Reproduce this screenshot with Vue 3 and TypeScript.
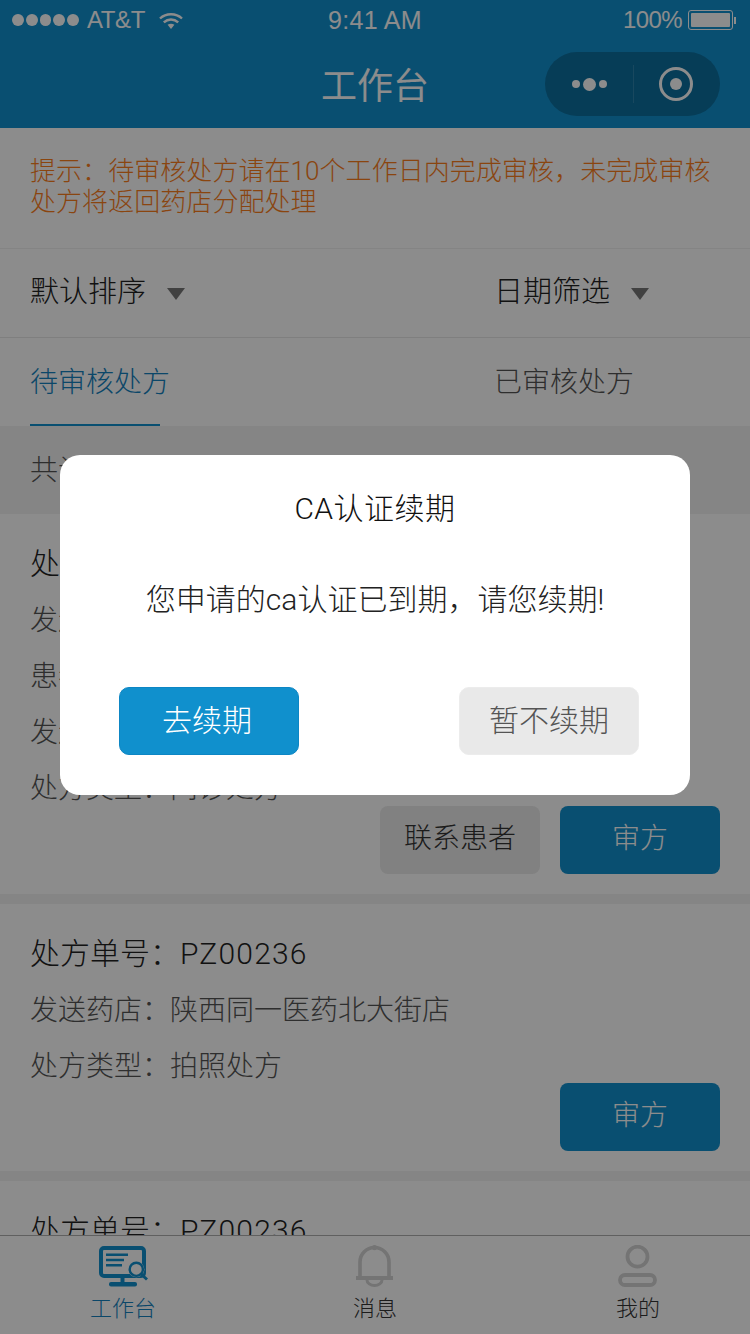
<template>
  <div class="page">
    <!-- 状态栏 + 导航 -->
    <header class="head">
      <div class="status">
        <div class="status-left">
          <span class="dots"><i v-for="n in 5" :key="n" /></span>
          <span class="carrier">AT&amp;T</span>
          <svg class="wifi" width="24" height="17" viewBox="0 0 24 17">
            <path d="M1 6.5C7 0.8 17 0.8 23 6.5" fill="none" stroke="#fff" stroke-width="2.4" />
            <path d="M4.8 10.4C9 6.6 15 6.6 19.2 10.4" fill="none" stroke="#fff" stroke-width="2.4" />
            <path d="M8.6 12.8C10.4 11.4 13.6 11.4 15.4 12.8L12 17Z" fill="#fff" />
          </svg>
        </div>
        <span class="time">9:41 AM</span>
        <div class="status-right">
          <span class="percent">100%</span>
          <span class="battery"><i /></span>
          <span class="battery-cap" />
        </div>
      </div>
      <div class="nav">
        <span class="nav-title">工作台</span>
        <div class="capsule">
          <span class="more"><i /><i class="big" /><i /></span>
          <span class="cap-line" />
          <span class="target"><span class="ring"><i /></span></span>
        </div>
      </div>
    </header>

    <main class="content">
      <p class="notice">提示：待审核处方请在10个工作日内完成审核，未完成审核处方将返回药店分配处理</p>
      <div class="filters">
        <div class="filter"><span>默认排序</span><i class="caret" /></div>
        <div class="filter"><span>日期筛选</span><i class="caret" /></div>
      </div>
      <div class="tabs">
        <div class="tab active">待审核处方</div>
        <div class="tab">已审核处方</div>
      </div>
      <div class="summary">共计12条</div>

      <section v-for="(card, i) in cards" :key="i" class="card">
        <div class="card-no">处方单号：<span class="no">{{ card.no }}</span></div>
        <div v-for="row in card.rows" :key="row" class="card-row">{{ row }}</div>
        <div class="card-btns" :class="{ solo: !card.contact }">
          <span v-if="card.contact" class="btn btn-gray">联系患者</span>
          <span class="btn btn-blue">审方</span>
        </div>
      </section>
    </main>

    <nav class="tabbar">
      <div class="bar-item on">
        <svg width="52" height="42" viewBox="0 0 52 42">
          <path d="M7 3H44A3 3 0 0 1 47 6V28A3 3 0 0 1 44 31H7A3 3 0 0 1 4 28V6A3 3 0 0 1 7 3Z" fill="none" stroke="#1290ce" stroke-width="4" />
          <path d="M9 9.7H31M9 15H27M9 20.3H25" stroke="#1290ce" stroke-width="2.4" fill="none" />
          <circle cx="39.3" cy="24.3" r="8" fill="#fff" />
          <circle cx="39.3" cy="24.3" r="6.6" fill="#fff" stroke="#1290ce" stroke-width="2.4" />
          <path d="M44 29L50 34.5" stroke="#1290ce" stroke-width="3" />
          <path d="M23.5 33H27.5V37.5H23.5Z" fill="#1290ce" />
          <rect x="12" y="37" width="28" height="4.5" rx="2" fill="#1290ce" />
        </svg>
        <span>工作台</span>
      </div>
      <div class="bar-item">
        <svg width="50" height="42" viewBox="0 0 50 42">
          <path d="M10 33V17A14.5 14.5 0 0 1 39 17V33" fill="none" stroke="#d3d3d3" stroke-width="3.6" />
          <circle cx="24.5" cy="2.6" r="2.6" fill="#d3d3d3" />
          <path d="M6 33H43" stroke="#d3d3d3" stroke-width="4" />
          <path d="M17 35A7.5 5.5 0 0 0 32 35" fill="none" stroke="#d3d3d3" stroke-width="3" />
        </svg>
        <span>消息</span>
      </div>
      <div class="bar-item">
        <svg width="50" height="42" viewBox="0 0 50 42">
          <circle cx="24.5" cy="11.7" r="10" fill="none" stroke="#d3d3d3" stroke-width="3.8" />
          <rect x="7" y="30" width="35" height="10" rx="5" fill="none" stroke="#d3d3d3" stroke-width="3.8" />
        </svg>
        <span>我的</span>
      </div>
    </nav>

    <!-- 续期弹窗 -->
    <div class="mask">
      <div class="dialog">
        <div class="dialog-title">CA认证续期</div>
        <div class="dialog-text">您申请的ca认证已到期，请您续期!</div>
        <div class="dialog-btns">
          <span class="d-btn d-ok">去续期</span>
          <span class="d-btn d-no">暂不续期</span>
        </div>
      </div>
    </div>
  </div>
</template>

<script setup lang="ts">
interface Card {
  no: string
  rows: string[]
  contact: boolean
}

const cards: Card[] = [
  {
    no: 'PZ00236',
    rows: ['发送药店：陕西同一医药北大街店', '患者姓名：张三', '发送时间：2018-08-12', '处方类型：问诊处方'],
    contact: true
  },
  {
    no: 'PZ00236',
    rows: ['发送药店：陕西同一医药北大街店', '处方类型：拍照处方'],
    contact: false
  },
  {
    no: 'PZ00236',
    rows: ['发送药店：陕西同一医药北大街店', '处方类型：拍照处方'],
    contact: false
  }
]
</script>

<style>
html,
body {
  margin: 0;
  padding: 0;
}
</style>

<style scoped>
.page {
  position: relative;
  width: 750px;
  height: 1334px;
  display: flex;
  flex-direction: column;
  overflow: hidden;
  background: #fff;
  color: #333;
  font-family: Roboto, "Noto Sans CJK SC", sans-serif;
  font-weight: 300;
}

.head {
  height: 128px;
  flex: none;
  background: #1290ce;
  color: #fff;
}
.status {
  height: 40px;
  display: flex;
  align-items: center;
  justify-content: space-between;
  padding: 0 14px 0 12px;
  font-family: "Liberation Sans", sans-serif;
  font-size: 24px;
  font-weight: 400;
}
.status-left {
  display: flex;
  align-items: center;
  width: 190px;
}
.dots {
  display: flex;
  gap: 2px;
  margin-right: 8px;
}
.dots i {
  width: 11.8px;
  height: 11.8px;
  border-radius: 50%;
  background: #fff;
}
.carrier {
  width: 57px;
  letter-spacing: -0.4px;
}
.wifi {
  margin-left: 15px;
}
.time {
  font-size: 25px;
  letter-spacing: 0.3px;
  margin-left: 2px;
}
.status-right {
  display: flex;
  align-items: center;
  justify-content: flex-end;
  width: 190px;
}
.percent {
  letter-spacing: -0.6px;
}
.battery {
  width: 39px;
  height: 14px;
  margin-left: 6px;
  padding: 2px;
  border: 1px solid #fff;
  border-radius: 3px;
  display: flex;
}
.battery i {
  flex: 1;
  background: #fff;
  border-radius: 1px;
}
.battery-cap {
  width: 2px;
  height: 7px;
  margin-left: 1px;
  background: #fff;
}
.nav {
  position: relative;
  height: 88px;
  display: flex;
  align-items: center;
  justify-content: center;
}
.nav-title {
  font-size: 36px;
  font-weight: 400;
  margin-top: -2px;
}
.capsule {
  position: absolute;
  right: 30px;
  top: 12px;
  width: 175px;
  height: 64px;
  border-radius: 32px;
  background: #0c6f9e;
  display: flex;
  align-items: center;
}
.more {
  width: 88px;
  display: flex;
  align-items: center;
  justify-content: center;
  gap: 3px;
}
.more i {
  width: 8px;
  height: 8px;
  border-radius: 50%;
  background: #fff;
}
.more i.big {
  width: 13px;
  height: 13px;
}
.cap-line {
  width: 1px;
  height: 38px;
  background: #2c84ae;
}
.target {
  flex: 1;
  display: flex;
  align-items: center;
  justify-content: center;
  padding-right: 3px;
}
.ring {
  width: 34px;
  height: 34px;
  box-sizing: border-box;
  border: 3.5px solid #fff;
  border-radius: 50%;
  display: flex;
  align-items: center;
  justify-content: center;
}
.ring i {
  width: 12px;
  height: 12px;
  border-radius: 50%;
  background: #fff;
}

.content {
  flex: 1;
  min-height: 0;
  overflow: hidden;
}
.notice {
  margin: 0;
  height: 121px;
  box-sizing: border-box;
  padding: 28px 30px 0;
  font-size: 26px;
  line-height: 31px;
  letter-spacing: 0.06px;
  color: #fb7e1d;
  border-bottom: 1px solid #f0f0f0;
}
.filters {
  height: 89px;
  box-sizing: border-box;
  display: flex;
  align-items: center;
  padding-bottom: 8px;
  border-bottom: 1px solid #e8e8e8;
  font-size: 29px;
  color: #222;
}
.filter {
  display: flex;
  align-items: center;
  box-sizing: border-box;
  padding-left: 30px;
}
.filter:first-child {
  width: 464px;
}
.caret {
  width: 0;
  height: 0;
  margin-left: 21px;
  margin-top: 10px;
  border-left: 9px solid transparent;
  border-right: 9px solid transparent;
  border-top: 12px solid #777;
}
.tabs {
  height: 88px;
  display: flex;
  font-size: 28px;
  color: #555;
}
.tab {
  box-sizing: border-box;
  padding: 22px 0 0 30px;
}
.tab.active {
  position: relative;
  flex: none;
  width: 464px;
  color: #1482c0;
}
.tab.active::after {
  content: "";
  position: absolute;
  left: 30px;
  bottom: 0;
  width: 130px;
  height: 2px;
  background: #1290ce;
}
.summary {
  height: 88px;
  box-sizing: border-box;
  padding: 22px 30px 0;
  background: #f3f3f3;
  font-size: 28px;
  color: #555;
}
.card {
  padding: 22px 30px 20px;
  border-bottom: 10px solid #f3f3f3;
}
.card-no {
  height: 56px;
  line-height: 56px;
  font-size: 30px;
  color: #222;
}
.no {
  letter-spacing: 1.2px;
}
.card-row {
  height: 56px;
  line-height: 58px;
  font-size: 28px;
  color: #555;
}
.card-btns {
  display: flex;
  justify-content: flex-end;
  gap: 20px;
  margin-top: -10px;
}
.card-btns.solo {
  margin-top: -11px;
}
.btn {
  width: 160px;
  height: 68px;
  line-height: 66px;
  text-align: center;
  border-radius: 8px;
  font-size: 28px;
}
.btn-gray {
  background: #ebebeb;
  color: #333;
}
.btn-blue {
  background: #1290ce;
  color: #fff;
}

.tabbar {
  height: 99px;
  flex: none;
  box-sizing: border-box;
  border-top: 1px solid #b0b0b0;
  background: #fff;
  display: flex;
  padding: 9px 0 0 97px;
}
.bar-item {
  display: flex;
  flex-direction: column;
  align-items: center;
  width: 52px;
  font-size: 22px;
  color: #333;
  line-height: 28px;
  white-space: nowrap;
}
.bar-item:nth-child(2) {
  margin-left: 200px;
}
.bar-item:nth-child(3) {
  margin-left: 211px;
}
.bar-item svg {
  margin-bottom: 8px;
  flex: none;
}
.bar-item.on {
  color: #1482c0;
}

.mask {
  position: absolute;
  inset: 0;
  background: rgba(0, 0, 0, 0.45);
  display: flex;
  justify-content: center;
  align-items: flex-start;
  padding-top: 455px;
}
.dialog {
  width: 630px;
  height: 340px;
  background: #fff;
  border-radius: 20px;
  display: flex;
  flex-direction: column;
  align-items: center;
  color: #111;
}
.dialog-title {
  margin-top: 33px;
  font-size: 30px;
  line-height: 42px;
  height: 42px;
  letter-spacing: 0.5px;
}
.dialog-text {
  margin-top: 49px;
  font-size: 30px;
  line-height: 42px;
  height: 42px;
  color: #222;
}
.dialog-btns {
  margin-top: 66px;
  margin-left: 8px;
  width: 520px;
  display: flex;
  justify-content: space-between;
}
.d-btn {
  width: 180px;
  height: 68px;
  box-sizing: border-box;
  border-radius: 10px;
  text-align: center;
  line-height: 66px;
  font-size: 30px;
}
.d-ok {
  background: #1090cd;
  border: 1px solid #0d86c4;
  padding-right: 4px;
  color: #fff;
}
.d-no {
  background: #e9e9e9;
  border: 1px solid #ececec;
  color: #555;
}
</style>
